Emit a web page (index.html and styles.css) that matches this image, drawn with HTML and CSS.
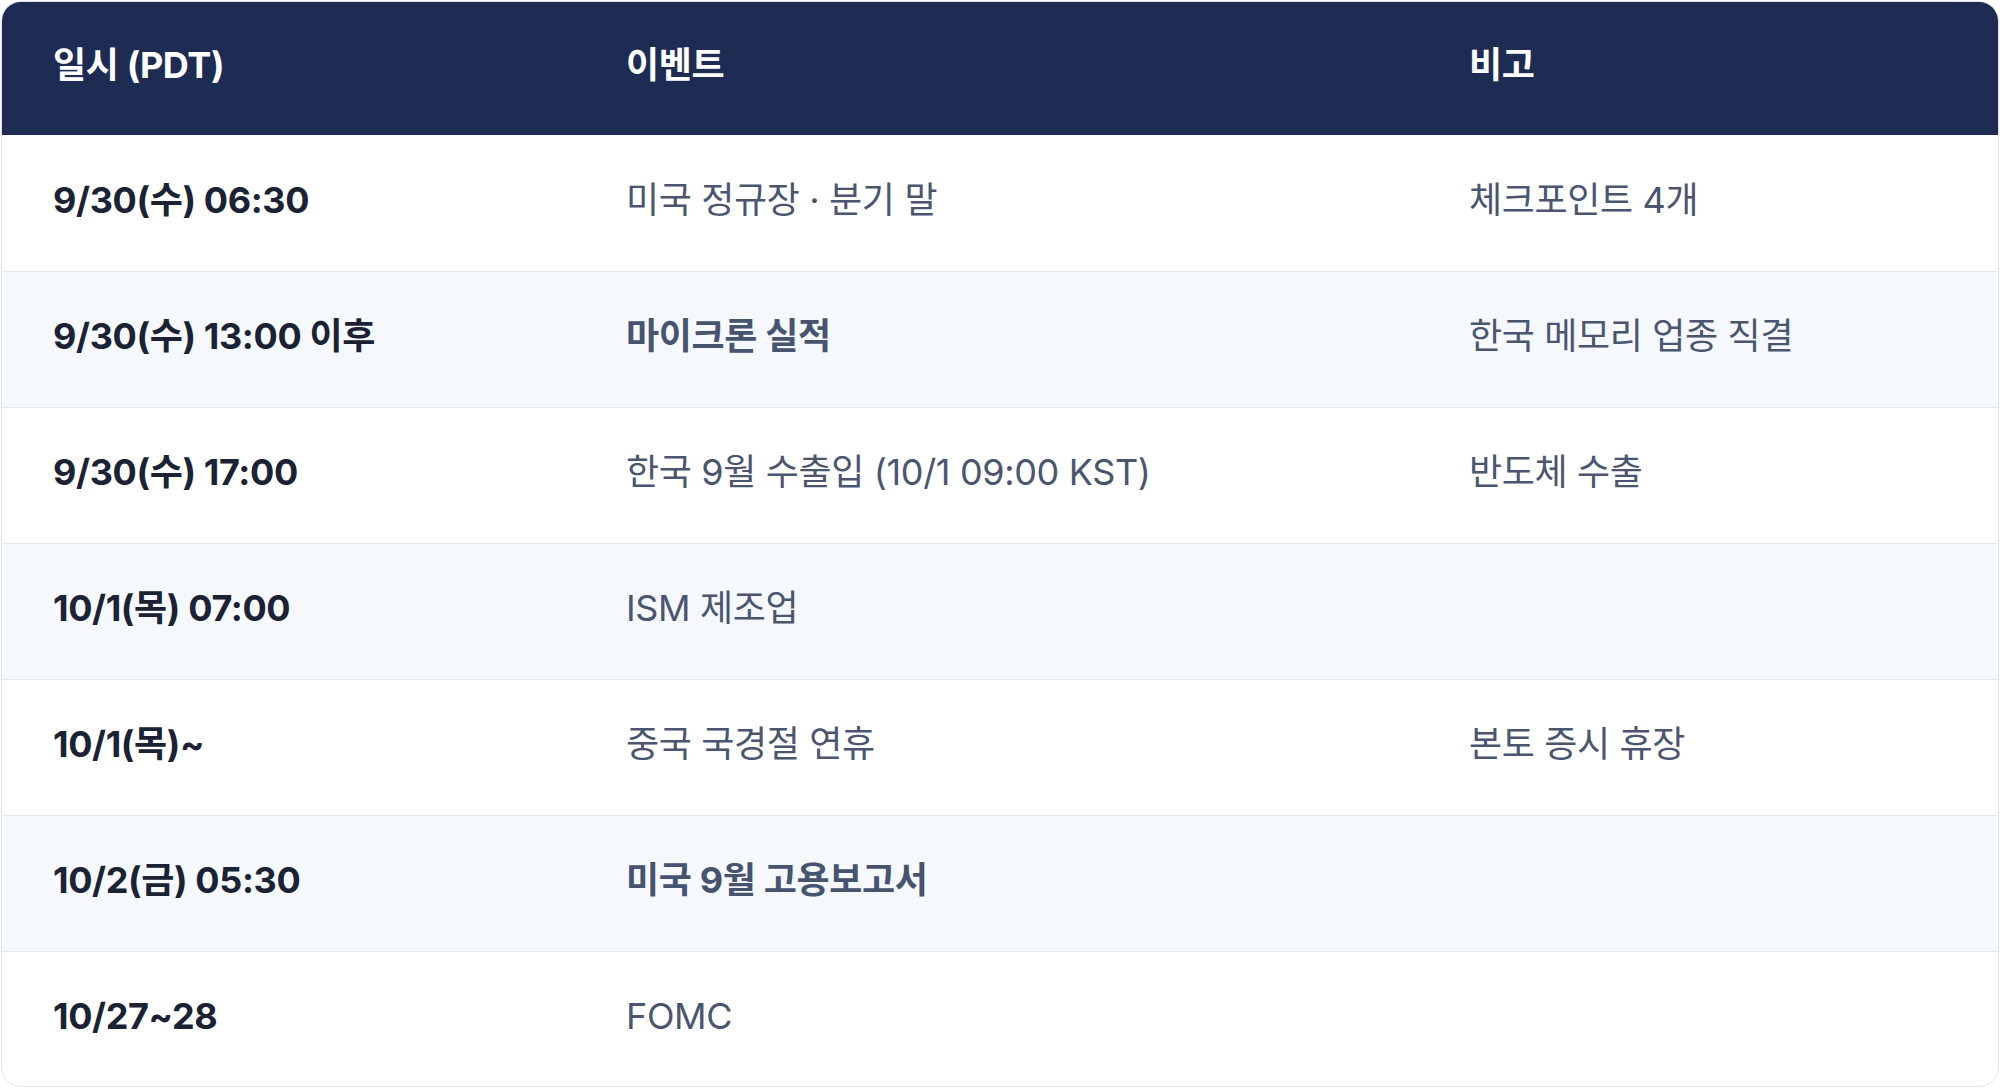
FILE: index.html
```html
<!DOCTYPE html>
<html lang="ko">
<head>
<meta charset="utf-8">
<title>일정</title>
<link rel="stylesheet" href="styles.css">
</head>
<body>
<div class="card">
  <table class="schedule">
    <colgroup>
      <col class="c-time">
      <col class="c-event">
      <col class="c-note">
    </colgroup>
    <thead>
      <tr>
        <th>일시 (PDT)</th>
        <th>이벤트</th>
        <th>비고</th>
      </tr>
    </thead>
    <tbody>
      <tr>
        <td class="time">9/30(수) 06:30</td>
        <td>미국 정규장 · 분기 말</td>
        <td>체크포인트 4개</td>
      </tr>
      <tr>
        <td class="time">9/30(수) 13:00 이후</td>
        <td class="strong">마이크론 실적</td>
        <td>한국 메모리 업종 직결</td>
      </tr>
      <tr>
        <td class="time">9/30(수) 17:00</td>
        <td>한국 9월 수출입 (10/1 09:00 KST)</td>
        <td>반도체 수출</td>
      </tr>
      <tr>
        <td class="time">10/1(목) 07:00</td>
        <td>ISM 제조업</td>
        <td></td>
      </tr>
      <tr>
        <td class="time">10/1(목)~</td>
        <td>중국 국경절 연휴</td>
        <td>본토 증시 휴장</td>
      </tr>
      <tr>
        <td class="time">10/2(금) 05:30</td>
        <td class="strong">미국 9월 고용보고서</td>
        <td></td>
      </tr>
      <tr>
        <td class="time">10/27~28</td>
        <td>FOMC</td>
        <td></td>
      </tr>
    </tbody>
  </table>
</div>
</body>
</html>
```

FILE: styles.css
```css
html, body {
  margin: 0;
  padding: 0;
  background: #ffffff;
}

body {
  font-family: Inter, "Noto Sans CJK KR", "Noto Sans", sans-serif;
  padding: 1px;
}

.card {
  width: 1996px;
  height: 1084px;
  border: 1px solid #dfe5f0;
  border-radius: 20px;
  overflow: hidden;
  background: #ffffff;
}

.schedule {
  width: 100%;
  border-collapse: collapse;
  table-layout: fixed;
}

.c-time { width: 573px; }
.c-event { width: 843px; }
.c-note { width: auto; }

.schedule thead th {
  background: #1e2b53;
  color: #ffffff;
  font-weight: 700;
  font-size: 36px;
  letter-spacing: -0.01em;
  line-height: 1.3;
  text-align: left;
  height: 127px;
  padding: 0 0 6px 51px;
  vertical-align: middle;
}

.schedule tbody td {
  height: 129px;
  padding: 0 0 6px 51px;
  font-size: 36px;
  letter-spacing: -0.01em;
  line-height: 1.3;
  color: #4a5570;
  font-weight: 400;
  vertical-align: middle;
  border-top: 1px solid #e1e7f1;
}

.schedule tbody tr:first-child td {
  border-top: none;
  height: 130px;
}

.schedule tbody tr:nth-child(even) td {
  background: #f5f8fc;
}

.schedule tbody td.time {
  color: #1a2233;
  font-weight: 700;
}

.schedule tbody td.strong {
  font-weight: 700;
  color: #475470;
}
```
